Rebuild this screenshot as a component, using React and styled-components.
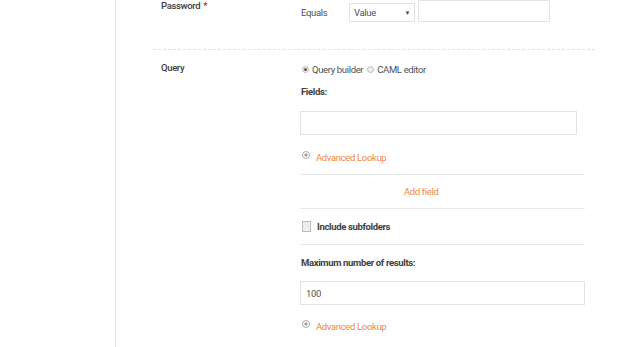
import React from 'react';
import styled, { createGlobalStyle } from 'styled-components';

const Global = createGlobalStyle`
    html, body {
        margin: 0;
        padding: 0;
        background: #fff;
    }
    body {
        font-family: Roboto, "Liberation Sans", Arial, sans-serif;
        font-size: 9.5px;
        letter-spacing: -0.35px;
        color: #505050;
    }
`;

const Page = styled.div`
    display: flex;
    width: 624px;
    height: 347px;
    overflow: hidden;
`;

const Sidebar = styled.div`
    width: 115px;
    flex-shrink: 0;
    border-right: 1px solid #e6e6e6;
`;

const Content = styled.div`
    margin-left: 37px;
    width: 442px;
`;

const Section = styled.div`
    display: flex;
    padding: ${p => p.$pad || '0'};
    border-bottom: ${p => p.$divided ? '1px dashed #e2e2e2' : 'none'};
`;

const Label = styled.div`
    width: 139px;
    padding-left: 8px;
    flex-shrink: 0;
    color: #3c3c3c;
    font-weight: 500;
    line-height: 12px;
`;

const Required = styled.span`
    color: #e5242a;
    font-weight: bold;
    margin-left: 3px;
`;

const Field = styled.div`
    width: 285px;
    display: flex;
    flex-direction: column;
`;

const FilterRow = styled.div`
    display: flex;
    align-items: center;
`;

const Equals = styled.span`
    margin-left: 1px;
    width: 48px;
`;

const Select = styled.div`
    width: 56px;
    height: 17px;
    border: 1px solid #e2e2e2;
    padding: 0 4px 0 4px;
    display: flex;
    align-items: center;
    justify-content: space-between;
`;

const Caret = styled.span`
    font-size: 6px;
    color: #444;
`;

const TextBox = styled.div`
    width: ${p => p.$w}px;
    height: ${p => p.$h || 22}px;
    border: 1px solid #e3e3e3;
    box-sizing: border-box;
    display: flex;
    align-items: center;
    padding-left: 5px;
    margin: ${p => p.$m || '0'};
`;

const RadioGroup = styled.div`
    display: flex;
    align-items: center;
    height: 14px;
    margin-left: 2px;
`;

const Radio = styled.span`
    width: 7px;
    height: 7px;
    border-radius: 50%;
    border: 1px solid #bbb;
    background: #eee;
    box-sizing: border-box;
    margin-right: 3px;
    display: inline-flex;
    align-items: center;
    justify-content: center;
    &::after {
        content: '';
        width: 3px;
        height: 3px;
        border-radius: 50%;
        background: ${p => p.$checked ? '#555' : 'transparent'};
    }
`;

const RadioText = styled.span`
    margin-right: 4px;
`;

const BoldLabel = styled.div`
    font-weight: bold;
    color: #404040;
    margin: ${p => p.$m || '0'};
    line-height: 12px;
`;

const LookupRow = styled.div`
    display: flex;
    align-items: center;
    height: 14px;
    margin: ${p => p.$m || '0'};
`;

const PlusSvg = styled.svg`
    margin: 0 6px 0 2px;
    position: relative;
    top: -2px;
`;

const Link = styled.span`
    color: #f0883c;
`;

const Block = styled.div`
    border-top: 1px solid #e8e8e8;
    height: ${p => p.$h}px;
    display: flex;
    align-items: center;
    padding-left: ${p => p.$indent || 0}px;
`;

const Checkbox = styled.span`
    width: 7px;
    height: 9px;
    border: 1px solid #bbb;
    background: #eee;
    margin: 0 6px 0 2px;
`;

const PlusIcon = () => (
    <PlusSvg width="8" height="8" viewBox="0 0 8 8">
        <circle cx="4" cy="4" r="3.5" fill="#fff" stroke="#aaa" strokeWidth="1" />
        <path d="M4 2.2v3.6M2.2 4h3.6" stroke="#777" strokeWidth="0.9" />
    </PlusSvg>
);

const Lookup = ({ m }) => (
    <LookupRow $m={m}>
        <PlusIcon />
        <Link>Advanced Lookup</Link>
    </LookupRow>
);

export default function App() {
    return (
        <Page>
            <Global />
            <Sidebar />
            <Content>
                <Section $divided $pad="0 0 27px">
                    <Label>
                        Password<Required>*</Required>
                    </Label>
                    <Field>
                        <FilterRow style={{ marginTop: 2 }}>
                            <Equals>Equals</Equals>
                            <Select>
                                Value <Caret>▼</Caret>
                            </Select>
                            <TextBox $w={132} $m="-2px 0 0 3px" />
                        </FilterRow>
                    </Field>
                </Section>
                <Section $pad="12px 0 0">
                    <Label>Query</Label>
                    <Field>
                        <RadioGroup>
                            <Radio $checked />
                            <RadioText>Query builder</RadioText>
                            <Radio />
                            <RadioText>CAML editor</RadioText>
                        </RadioGroup>
                        <BoldLabel $m="10px 0 0 1px">Fields:</BoldLabel>
                        <TextBox $w={277} $h={24} $m="13px 0 0" />
                        <Lookup m="15px 0 10px" />
                        <Block $h={33} $indent={104}>
                            <Link>Add field</Link>
                        </Block>
                        <Block $h={35}>
                            <Checkbox />
                            <BoldLabel>Include subfolders</BoldLabel>
                        </Block>
                        <Block $h={1} />
                        <BoldLabel $m="11px 0 0 1px">Maximum number of results:</BoldLabel>
                        <TextBox $w={285} $h={24} $m="12px 0 0">100</TextBox>
                        <Lookup m="14px 0 0" />
                    </Field>
                </Section>
            </Content>
        </Page>
    );
}
